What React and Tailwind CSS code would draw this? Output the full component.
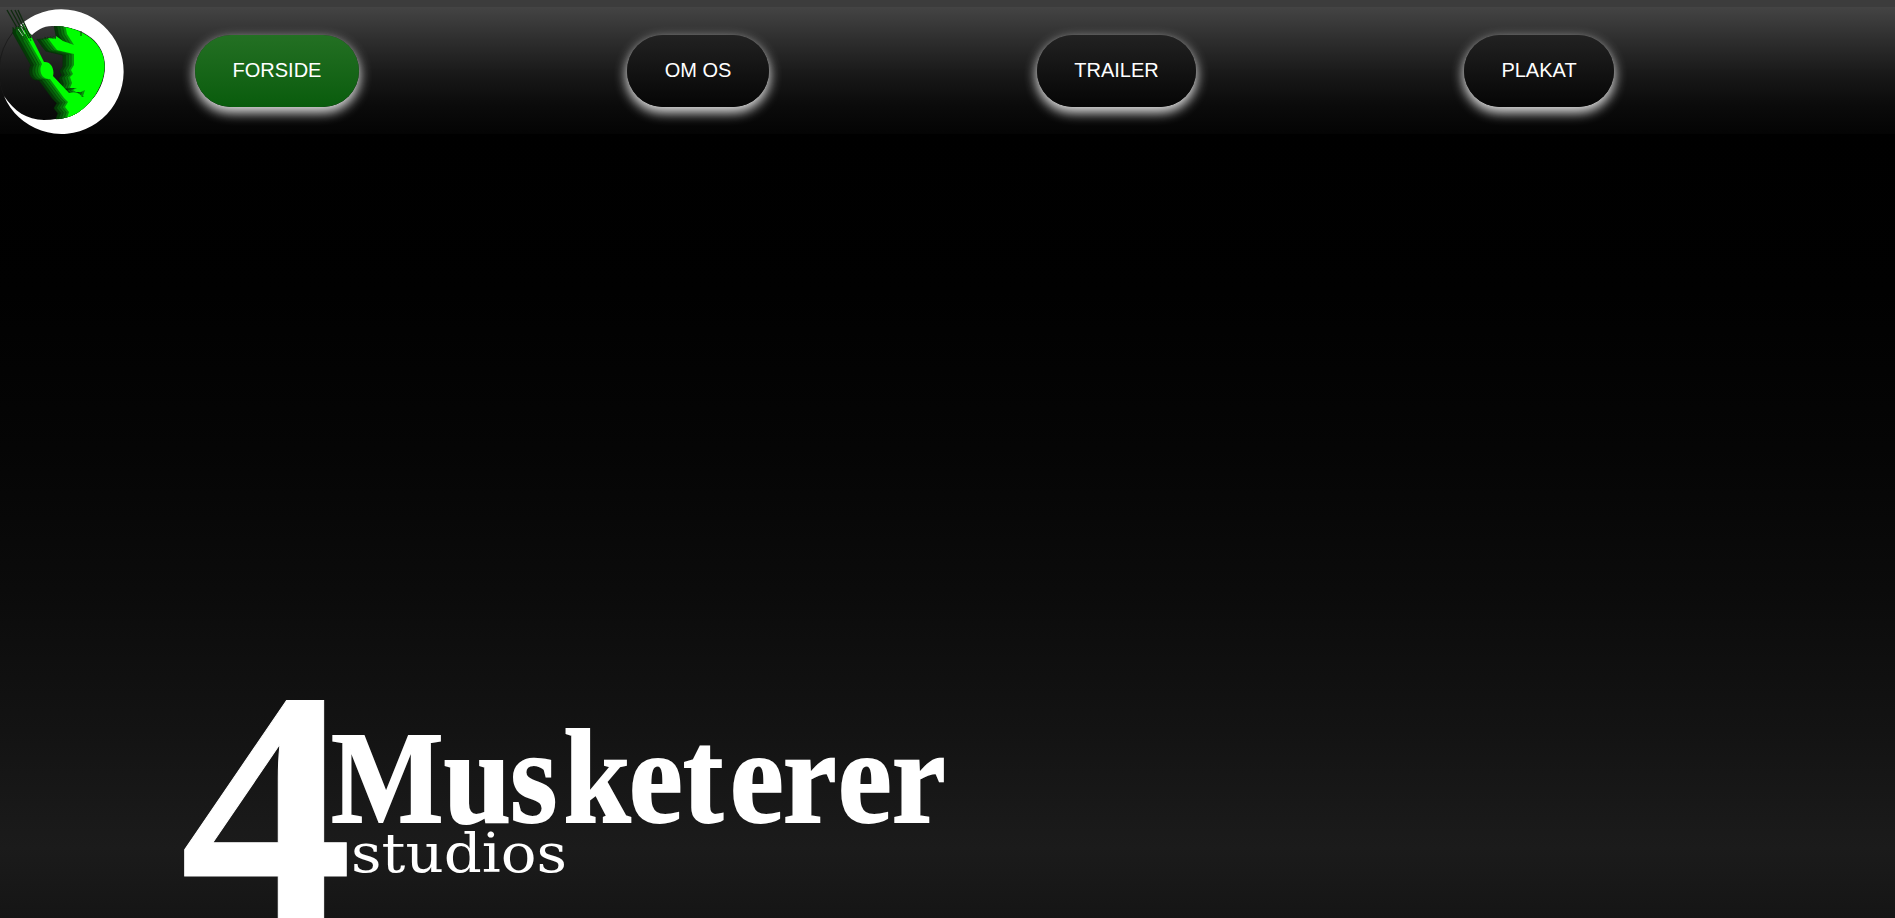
const links = [
  { label: "FORSIDE", box: "ml-[195px] w-[164px] from-[#237023] to-[#085c0c]" },
  { label: "OM OS", box: "ml-[268px] w-[142px] from-[#222] to-[#060606]" },
  { label: "TRAILER", box: "ml-[268px] w-[159px] from-[#222] to-[#060606]" },
  { label: "PLAKAT", box: "ml-[268px] w-[150px] from-[#222] to-[#060606]" },
];

const shades = ["#053a07", "#07590b", "#08740c", "#08920c", "#00ff00"];

function Emblem() {
  return (
    <svg className="block size-full" viewBox="0 0 135 134">
      <defs>
        <clipPath id="disc">
          <path d="M0 0H32L52 26C70 25 104.500 36 104.500 66C104.500 86 89 109 71 116C56 122 35 121 22 115L0 70Z" />
        </clipPath>
      </defs>
      <path d="M20 25A62 62 0 0 0 4 96" fill="none" stroke="#181818" strokeWidth=".8" />
      <path
        d="M20 25A62.3 62.3 0 1 1 4 96C14 111 27 120 44 120C81 120 105 94 105 66C105 44 86 26 52 26C43 26 36 31 32 35Z"
        fill="#fff"
      />
      <g clipPath="url(#disc)">
        {shades.map((fill, i) => (
          <g
            key={fill}
            fill={fill}
            stroke={i < 4 ? "#043006" : "none"}
            strokeWidth=".4"
            transform={`translate(${(i - 4) * 2.8} ${(4 - i) * 0.3})`}
          >
            <path d="M65 24H110V90L86 98L83 96L85 90L81 92H76L73 90L77 88H70L72 83L70 77L73 74L71 70L74 65V54L57 50L53 45L48 38L56 39V36L63 41L74 45L67 34Z" />
            <path d="M24 26L29 32L44 62C50 61 55 68 53 76L69 93C75 91 80 93 82 97L110 90V118H67L69 112L65 107L68 102L64 98L50 79C42 80 38 71 42 64L24 32Z" />
          </g>
        ))}
      </g>
      <path d="M7 10L24 40M11 10L27 39M15 10L29 38M18 10L31 38" stroke="#102a10" strokeWidth="1.4" />
      <path d="M17 27L27 45M20 26L29 43M23 24L31 41" stroke="#08770c" strokeWidth="1" />
      <path d="M18 29L23 36M21 27L25 34" stroke="#ddd" strokeWidth=".7" />
      <path d="M81 31V36" stroke="#063d08" />
    </svg>
  );
}

function Wordmark() {
  return (
    <svg
      className="block h-[238px] w-[800px] overflow-hidden"
      viewBox="170 680 800 238"
      fill="#fff"
      stroke="#fff"
      fontFamily="'Liberation Serif', serif"
      fontWeight="700"
    >
      <text transform="translate(180 919) scale(1.04 1)" fontSize="332" strokeWidth="1">4</text>
      <text
        transform="translate(0 822) scale(.9 1)"
        x="368 493 567 626 699 759 811 870 931 991"
        fontSize="134"
        strokeWidth="2"
      >
        <tspan fontSize="132">M</tspan>usketerer
      </text>
      <text
        x="351"
        y="872"
        fontFamily="'DejaVu Serif', serif"
        fontSize="55"
        fontWeight="400"
        stroke="none"
        textLength="216"
        lengthAdjust="spacingAndGlyphs"
      >
        studios
      </text>
    </svg>
  );
}

export default function App() {
  return (
    <div className="flex h-screen flex-col overflow-hidden bg-black font-['Liberation_Sans',sans-serif] text-white">
      <header className="h-[134px] shrink-0 bg-[linear-gradient(#3c3c3c_7px,#444_7px,#2e2e2e_40px,#181818_75px,#0b0b0b_105px,#040404_134px)]">
        <div className="flex h-full items-start">
          <div className="-mr-[135px] h-[134px] w-[135px] shrink-0">
            <Emblem />
          </div>
          <nav className="flex pt-[35px]">
            {links.map(({ label, box }) => (
              <a
                key={label}
                href="#"
                className={`flex h-[72px] shrink-0 items-center justify-center rounded-[40px] bg-linear-to-b pb-0.5 text-xl shadow-[0_5px_12px_1px_#ddd] ${box}`}
              >
                {label}
              </a>
            ))}
          </nav>
        </div>
      </header>
      <main className="flex flex-1 items-end bg-[linear-gradient(#000_0%,#010101_20%,#050505_40%,#0b0b0b_58%,#131313_76%,#1b1b1b_91%,#151515_100%)] pl-[170px]">
        <Wordmark />
      </main>
    </div>
  );
}
